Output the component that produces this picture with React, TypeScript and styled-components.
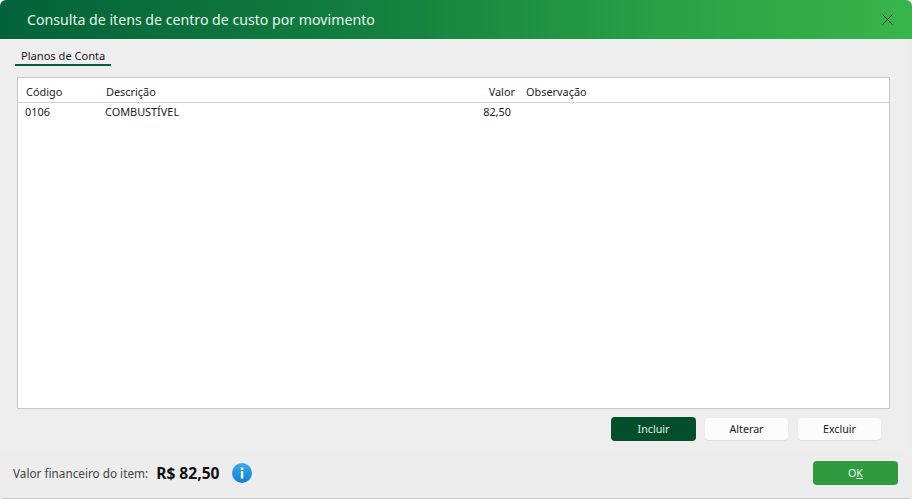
import { createGlobalStyle } from 'styled-components';
import styled from 'styled-components';

export default function App() {
    return (
        <>
            <GlobalStyle />

            <Dialog>
                <TitleBar>
                    <Title>Consulta de itens de centro de custo por movimento</Title>

                    <CloseButton aria-label="Fechar">
                        <svg width="11" height="11" viewBox="0 0 11 11">
                            <path
                                d="M0.5 0.5L10.5 10.5M10.5 0.5L0.5 10.5"
                                stroke="#17402a"
                                strokeWidth="1"
                            />
                        </svg>
                    </CloseButton>
                </TitleBar>

                <Body>
                    <Tabs>
                        <Tab>Planos de Conta</Tab>
                    </Tabs>

                    <Grid>
                        <HeaderRow>
                            <CodeCol>Código</CodeCol>
                            <DescCol>Descrição</DescCol>
                            <ValueCol>Valor</ValueCol>
                            <NoteCol>Observação</NoteCol>
                        </HeaderRow>

                        <DataRow>
                            <CodeCol>0106</CodeCol>
                            <DescCol>COMBUSTÍVEL</DescCol>
                            <ValueCellCol>82,50</ValueCellCol>
                            <NoteCol />
                        </DataRow>
                    </Grid>

                    <Actions>
                        <PrimaryButton>Incluir</PrimaryButton>
                        <PlainButton>Alterar</PlainButton>
                        <PlainButton>Excluir</PlainButton>
                    </Actions>
                </Body>

                <Footer>
                    <TotalLabel>Valor financeiro do item:</TotalLabel>
                    <TotalValue>R$ 82,50</TotalValue>

                    <InfoIcon>
                        <svg width="20" height="20" viewBox="0 0 20 20">
                            <defs>
                                <linearGradient id="info" x1="0" y1="0" x2="0" y2="1">
                                    <stop offset="0" stopColor="#3cabe6" />
                                    <stop offset="1" stopColor="#0b7fd4" />
                                </linearGradient>
                            </defs>
                            <circle cx="10" cy="10" r="10" fill="url(#info)" />
                            <rect x="8.8" y="8.2" width="2.5" height="7.3" fill="#fff" />
                            <rect x="8.8" y="4.6" width="2.5" height="2.4" fill="#fff" />
                        </svg>
                    </InfoIcon>

                    <OkButton>
                        O<u>K</u>
                    </OkButton>
                </Footer>
            </Dialog>
        </>
    );
}

const GlobalStyle = createGlobalStyle`
    html, body {
        margin: 0;
        padding: 0;
        background: #ffffff;
    }

    body {
        font-family: "Noto Sans", "Open Sans", sans-serif;
    }
`;

const Dialog = styled.div`
    width: 912px;
    height: 499px;
    box-sizing: border-box;
    display: flex;
    flex-direction: column;
    background: #ededed;
    border-bottom: 1px solid #c6c6c6;
    border-radius: 6px 6px 4px 4px;
    overflow: hidden;
`;

const TitleBar = styled.div`
    height: 39px;
    flex-shrink: 0;
    display: flex;
    align-items: center;
    justify-content: space-between;
    padding: 0 19px 0 27px;
    background: linear-gradient(90deg, #03623a 0%, #13803f 42%, #2a9f46 72%, #38b54a 100%);
`;

const Title = styled.h1`
    margin: 0;
    font-size: 14.15px;
    font-weight: 400;
    color: #e8f5ea;
    white-space: nowrap;
`;

const CloseButton = styled.button`
    display: flex;
    padding: 0;
    border: 0;
    background: none;
`;

const Body = styled.div`
    height: 413px;
    flex-shrink: 0;
    box-sizing: border-box;
    display: flex;
    flex-direction: column;
    margin-right: 6px;
    padding: 9px 0 0 15px;
    background: #eeeeee;
`;

const Tabs = styled.div`
    display: flex;
`;

const Tab = styled.div`
    width: 96px;
    height: 18px;
    box-sizing: border-box;
    padding-left: 6px;
    font-size: 11.1px;
    line-height: 16px;
    color: #1c1420;
    border-bottom: 2px solid #03623a;
`;

const Grid = styled.div`
    width: 873px;
    height: 332px;
    box-sizing: border-box;
    margin: 11px 0 0 2px;
    background: #ffffff;
    border: 1px solid #c8c8c8;
`;

const HeaderRow = styled.div`
    height: 25px;
    box-sizing: border-box;
    display: flex;
    align-items: center;
    padding: 3px 0 0 1px;
    font-size: 10.9px;
    color: #222222;
    border-bottom: 1px solid #cfcfcf;
`;

const DataRow = styled.div`
    height: 16px;
    display: flex;
    align-items: center;
    font-size: 10.9px;
    color: #1a1a1a;
`;

const CodeCol = styled.div`
    width: 87px;
    padding-left: 7px;
    box-sizing: border-box;
`;

const DescCol = styled.div`
    width: 323px;
`;

const ValueCol = styled.div`
    width: 86px;
    text-align: right;
`;

const ValueCellCol = styled(ValueCol)`
    width: 83px;
    margin-right: 4px;
`;

const NoteCol = styled.div`
    margin-left: 11px;
`;

const Actions = styled.div`
    display: flex;
    align-items: center;
    gap: 9px;
    margin: 8px 0 0 596px;
`;

const PrimaryButton = styled.button`
    width: 85px;
    height: 24px;
    padding: 0;
    border: 0;
    border-radius: 4px;
    background: #034f2b;
    color: #e6f2ea;
    font-family: inherit;
    font-size: 10.7px;
`;

const PlainButton = styled.button`
    width: 83px;
    height: 22px;
    padding: 0;
    border: 0;
    border-radius: 4px;
    background: #fcfcfc;
    box-shadow: 0 1px 1px #dcdcdc;
    color: #1a1a1a;
    font-family: inherit;
    font-size: 10.7px;

    & + & {
        margin-left: 1px;
    }
`;

const Footer = styled.div`
    flex: 1;
    display: flex;
    align-items: center;
    padding: 0 14px 4px 13px;
`;

const TotalLabel = styled.span`
    font-size: 11.75px;
    color: #444444;
`;

const TotalValue = styled.span`
    margin-left: 8px;
    font-size: 15.6px;
    font-weight: 700;
    color: #111111;
`;

const InfoIcon = styled.span`
    display: flex;
    margin-left: 13px;
`;

const OkButton = styled.button`
    width: 85px;
    height: 24px;
    margin-left: auto;
    padding: 0;
    border: 0;
    border-radius: 4px;
    background: #2f9a40;
    color: #e6f5e8;
    font-family: inherit;
    font-size: 10.7px;
`;
